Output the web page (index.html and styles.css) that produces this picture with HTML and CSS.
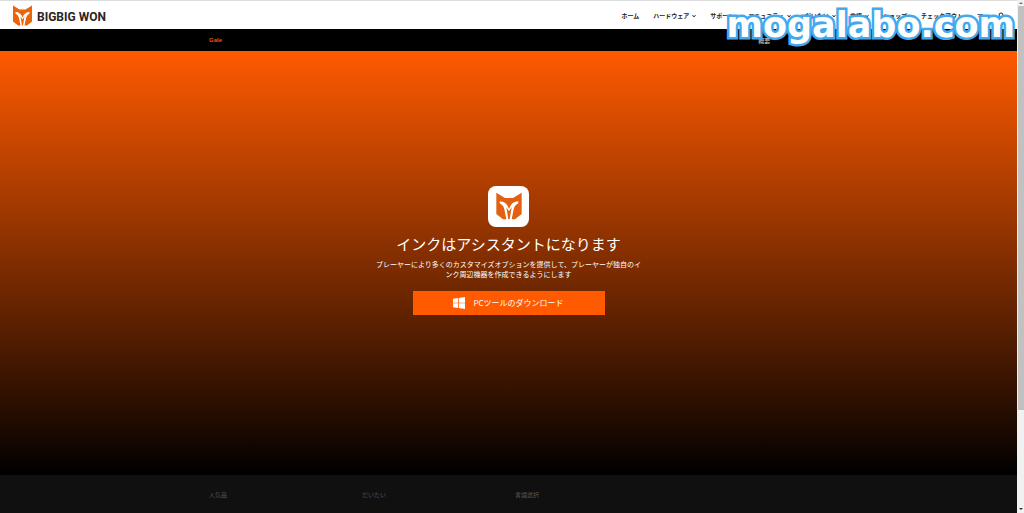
FILE: index.html
```html
<!DOCTYPE html>
<html lang="ja">
<head>
<meta charset="utf-8">
<title>BIGBIG WON</title>
<link rel="stylesheet" href="styles.css">
</head>
<body>
<svg class="defs" aria-hidden="true">
  <symbol id="mask" viewBox="0 0 40 42">
    <path d="M1 1 L14 9 H26 L39 1 V33 L29 41 H24 L27 26 Q28 20 34 17 V14 Q24 14 20 25 Q16 14 6 14 V17 Q12 20 13 26 L16 41 H11 L1 33 Z"/>
    <path d="M16 23 L20 29 L24 23 L21 41 H19 Z"/>
  </symbol>
  <symbol id="chevron" viewBox="0 0 8 8"><path d="M1 2 L4 6 L7 2" fill="none" stroke="#222" stroke-width="1.8"/></symbol>
</svg>
<div class="page">
  <div class="content">
    <header class="header">
      <a class="brand" href="#"><svg class="brand-icon"><use href="#mask"/></svg><span>BIGBIG WON</span></a>
      <nav class="nav">
        <a href="#">ホーム</a>
        <a href="#">ハードウェア<svg class="chev"><use href="#chevron"/></svg></a>
        <a href="#">サポート</a>
        <a href="#">コミュニティ<svg class="chev"><use href="#chevron"/></svg></a>
        <a href="#">だいたい<svg class="chev"><use href="#chevron"/></svg></a>
        <a href="#">言語<svg class="chev"><use href="#chevron"/></svg></a>
        <a href="#">ショップ</a>
        <a href="#">チェックアウト</a>
        <a href="#">マ</a>
        <button class="search" aria-label="検索"><svg viewBox="0 0 8 8"><circle cx="4" cy="3" r="2" fill="none" stroke="#222"/><path d="M5 5 L7 7" stroke="#222"/></svg></button>
      </nav>
    </header>
    <div class="subnav"><a class="gale" href="#">Gale</a><a class="buy" href="#">概要</a></div>
    <main class="hero">
      <span class="app-icon"><svg><use href="#mask"/></svg></span>
      <h1>インクはアシスタントになります</h1>
      <p>プレーヤーにより多くのカスタマイズオプションを提供して、プレーヤーが独自のイ<br>ンク周辺機器を作成できるようにします</p>
      <a class="download" href="#"><svg viewBox="0 0 24 24"><path d="M0 3.5 L10 2 V11.3 H0 Z M11.5 1.8 L24 0 V11.3 H11.5 Z M0 12.7 H10 V22 L0 20.5 Z M11.5 12.7 H24 V24 L11.5 22.2 Z"/></svg>PCツールのダウンロード</a>
    </main>
    <footer class="footer"><span>人気品</span><span>だいたい</span><span>言語選択</span></footer>
  </div>
  <div class="scrollbar"><i class="up"></i><div class="thumb"></div><i class="down"></i></div>
</div>
<div class="watermark">mogalabo.com</div>
</body>
</html>
```
FILE: styles.css
```css
* { box-sizing: border-box; }
body { margin: 0; background: #000; font-family: "Liberation Sans", "Noto Sans CJK JP", sans-serif; }
a { color: inherit; text-decoration: none; }
.defs { position: absolute; width: 0; height: 0; }
.page { display: flex; min-height: 100vh; }
.content { flex: 1; display: flex; flex-direction: column; }
.header { display: flex; align-items: center; justify-content: space-between; height: 29px; padding: 1px 12px 0; background: #fff; border-top: 1px solid #ddd; }
.brand { display: flex; align-items: center; gap: 4px; color: #2e2421; font: bold 12px/20px Roboto, sans-serif; }
.brand span { padding-top: 2px; }
.brand-icon { width: 21px; height: 21px; fill: #ea640c; }
.nav { display: flex; align-items: center; gap: 14px; font-size: 6px; font-weight: 700; color: #222; }
.nav a { display: flex; align-items: center; gap: 3px; white-space: nowrap; }
.chev { width: 4px; height: 4px; }
.search { width: 8px; height: 8px; padding: 0; border: 0; background: none; }
.search svg { display: block; }
.subnav { display: grid; grid-template-columns: 54% 1fr; height: 22px; align-items: center; padding-left: 209px; background: #000; font-size: 6px; font-weight: 700; color: #aaa; }
.subnav .gale { color: #e8560f; }
.subnav .buy { padding-left: 113px; }
.hero { flex: 1; display: flex; flex-direction: column; align-items: center; justify-content: center; padding-bottom: 26px; color: #fff; text-align: center; background: linear-gradient(#ff5a00, #000); font-family: "Noto Sans CJK JP", sans-serif; }
.app-icon { display: grid; place-items: center; width: 41px; height: 41px; border-radius: 8px; background: #fff; }
.app-icon svg { width: 28px; height: 28px; fill: #e2600f; }
h1 { margin: 7px 0 5px; font-size: 15px; line-height: 20px; font-weight: 400; }
p { margin: 0 0 12px; font-size: 7px; line-height: 10px; }
.download { display: flex; align-items: center; justify-content: center; gap: 8px; width: 192px; height: 24px; background: #ff5a00; font-size: 8px; }
.download svg { width: 12px; height: 12px; fill: #fff; }
.footer { display: grid; grid-template-columns: 153px 153px 1fr; align-items: center; height: 38px; padding-left: 209px; background: #101010; color: #555; font-size: 6px; }
.scrollbar { display: flex; flex-direction: column; align-items: center; width: 7px; background: #f1f1f1; }
.thumb { width: 6px; height: 404px; background: #c1c1c1; }
.up, .down { width: 0; border: 2px solid transparent; }
.up { margin: 2px 0; border-top: 0; border-bottom-color: #777; }
.down { margin: auto 0 3px; border-bottom: 0; border-top-color: #333; }
.watermark { position: absolute; top: 2px; right: 9px; color: #fff; font: bold 35px/46px "DejaVu Sans", sans-serif; -webkit-text-stroke: 5px #43a8ee; stroke-linejoin: round; paint-order: stroke fill; }
```
